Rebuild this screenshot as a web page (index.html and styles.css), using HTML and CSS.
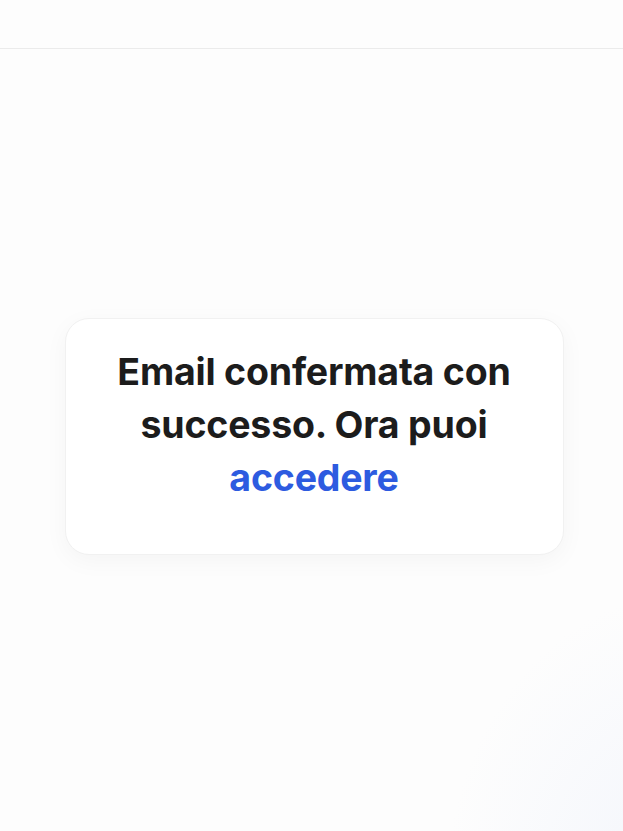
FILE: index.html
```html
<!DOCTYPE html>
<html lang="it">
<head>
<meta charset="utf-8">
<title>Email confermata</title>
<link rel="stylesheet" href="styles.css">
</head>
<body>
<header class="topbar"></header>
<main class="main">
  <div class="card">
    <p class="message">Email confermata con successo. Ora puoi <a class="link" href="#">accedere</a></p>
  </div>
</main>
</body>
</html>
```
FILE: styles.css
```css
html, body {
  margin: 0;
  padding: 0;
  height: 100%;
}
body {
  background: #fdfdfd;
  font-family: Inter, "Noto Sans", sans-serif;
  display: flex;
  flex-direction: column;
  min-height: 100vh;
  overflow: hidden;
}
.topbar {
  height: 48px;
  flex: 0 0 48px;
  border-bottom: 1px solid #ebebeb;
  background: #fdfdfd;
}
.main {
  flex: 1;
  display: flex;
  align-items: center;
  justify-content: center;
  padding-left: 5px;
  background: radial-gradient(ellipse 240px 300px at 110% 108%, rgba(230, 236, 250, 0.45), rgba(253, 253, 253, 0) 100%), #fdfdfd;
}
.card {
  width: 499px;
  box-sizing: border-box;
  height: 237px;
  margin-top: -7px;
  background: #ffffff;
  border: 1px solid #f1f1f1;
  border-radius: 24px;
  box-shadow: 0 6px 24px rgba(0, 0, 0, 0.04);
  display: flex;
  align-items: flex-start;
  justify-content: center;
  padding: 26px 30px 0;
}
.message {
  margin: 0;
  text-align: center;
  font-size: 37.5px;
  line-height: 53px;
  font-weight: 700;
  color: #1c1c1c;
  letter-spacing: -0.2px;
}
.link {
  color: #2d5be0;
  text-decoration: none;
}
```
